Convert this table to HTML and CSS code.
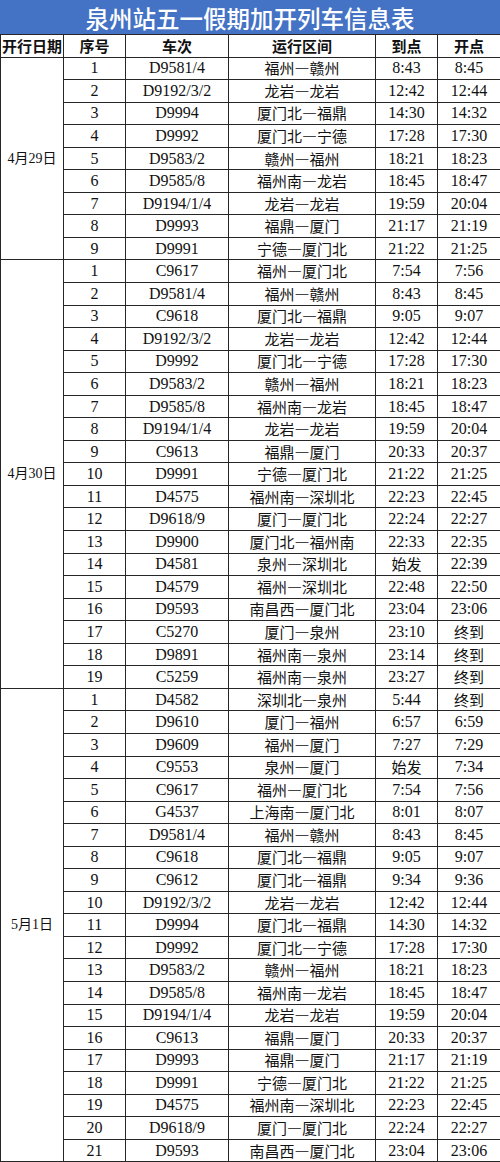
FILE: index.html
```html
<!DOCTYPE html>
<html lang="zh-CN">
<head>
<meta charset="utf-8">
<title>泉州站五一假期加开列车信息表</title>
<link rel="stylesheet" href="styles.css">
</head>
<body>
<div class="sheet">
  <div class="title">泉州站五一假期加开列车信息表</div>
  <table class="grid">
    <colgroup>
      <col class="c-date"><col class="c-no"><col class="c-train"><col class="c-route"><col class="c-arr"><col class="c-dep">
    </colgroup>
    <thead>
      <tr><th>开行日期</th><th>序号</th><th>车次</th><th>运行区间</th><th>到点</th><th>开点</th></tr>
    </thead>
    <tbody>
      <tr><td class="date" rowspan="9">4月29日</td><td>1</td><td>D9581/4</td><td class="route">福州—赣州</td><td>8:43</td><td>8:45</td></tr>
      <tr><td>2</td><td>D9192/3/2</td><td class="route">龙岩—龙岩</td><td>12:42</td><td>12:44</td></tr>
      <tr><td>3</td><td>D9994</td><td class="route">厦门北—福鼎</td><td>14:30</td><td>14:32</td></tr>
      <tr><td>4</td><td>D9992</td><td class="route">厦门北—宁德</td><td>17:28</td><td>17:30</td></tr>
      <tr><td>5</td><td>D9583/2</td><td class="route">赣州—福州</td><td>18:21</td><td>18:23</td></tr>
      <tr><td>6</td><td>D9585/8</td><td class="route">福州南—龙岩</td><td>18:45</td><td>18:47</td></tr>
      <tr><td>7</td><td>D9194/1/4</td><td class="route">龙岩—龙岩</td><td>19:59</td><td>20:04</td></tr>
      <tr><td>8</td><td>D9993</td><td class="route">福鼎—厦门</td><td>21:17</td><td>21:19</td></tr>
      <tr><td>9</td><td>D9991</td><td class="route">宁德—厦门北</td><td>21:22</td><td>21:25</td></tr>

      <tr><td class="date" rowspan="19">4月30日</td><td>1</td><td>C9617</td><td class="route">福州—厦门北</td><td>7:54</td><td>7:56</td></tr>
      <tr><td>2</td><td>D9581/4</td><td class="route">福州—赣州</td><td>8:43</td><td>8:45</td></tr>
      <tr><td>3</td><td>C9618</td><td class="route">厦门北—福鼎</td><td>9:05</td><td>9:07</td></tr>
      <tr><td>4</td><td>D9192/3/2</td><td class="route">龙岩—龙岩</td><td>12:42</td><td>12:44</td></tr>
      <tr><td>5</td><td>D9992</td><td class="route">厦门北—宁德</td><td>17:28</td><td>17:30</td></tr>
      <tr><td>6</td><td>D9583/2</td><td class="route">赣州—福州</td><td>18:21</td><td>18:23</td></tr>
      <tr><td>7</td><td>D9585/8</td><td class="route">福州南—龙岩</td><td>18:45</td><td>18:47</td></tr>
      <tr><td>8</td><td>D9194/1/4</td><td class="route">龙岩—龙岩</td><td>19:59</td><td>20:04</td></tr>
      <tr><td>9</td><td>C9613</td><td class="route">福鼎—厦门</td><td>20:33</td><td>20:37</td></tr>
      <tr><td>10</td><td>D9991</td><td class="route">宁德—厦门北</td><td>21:22</td><td>21:25</td></tr>
      <tr><td>11</td><td>D4575</td><td class="route">福州南—深圳北</td><td>22:23</td><td>22:45</td></tr>
      <tr><td>12</td><td>D9618/9</td><td class="route">厦门—厦门北</td><td>22:24</td><td>22:27</td></tr>
      <tr><td>13</td><td>D9900</td><td class="route">厦门北—福州南</td><td>22:33</td><td>22:35</td></tr>
      <tr><td>14</td><td>D4581</td><td class="route">泉州—深圳北</td><td class="cn">始发</td><td>22:39</td></tr>
      <tr><td>15</td><td>D4579</td><td class="route">福州—深圳北</td><td>22:48</td><td>22:50</td></tr>
      <tr><td>16</td><td>D9593</td><td class="route">南昌西—厦门北</td><td>23:04</td><td>23:06</td></tr>
      <tr><td>17</td><td>C5270</td><td class="route">厦门—泉州</td><td>23:10</td><td class="cn">终到</td></tr>
      <tr><td>18</td><td>D9891</td><td class="route">福州南—泉州</td><td>23:14</td><td class="cn">终到</td></tr>
      <tr><td>19</td><td>C5259</td><td class="route">福州南—泉州</td><td>23:27</td><td class="cn">终到</td></tr>

      <tr><td class="date" rowspan="21">5月1日</td><td>1</td><td>D4582</td><td class="route">深圳北—泉州</td><td>5:44</td><td class="cn">终到</td></tr>
      <tr><td>2</td><td>D9610</td><td class="route">厦门—福州</td><td>6:57</td><td>6:59</td></tr>
      <tr><td>3</td><td>D9609</td><td class="route">福州—厦门</td><td>7:27</td><td>7:29</td></tr>
      <tr><td>4</td><td>C9553</td><td class="route">泉州—厦门</td><td class="cn">始发</td><td>7:34</td></tr>
      <tr><td>5</td><td>C9617</td><td class="route">福州—厦门北</td><td>7:54</td><td>7:56</td></tr>
      <tr><td>6</td><td>G4537</td><td class="route">上海南—厦门北</td><td>8:01</td><td>8:07</td></tr>
      <tr><td>7</td><td>D9581/4</td><td class="route">福州—赣州</td><td>8:43</td><td>8:45</td></tr>
      <tr><td>8</td><td>C9618</td><td class="route">厦门北—福鼎</td><td>9:05</td><td>9:07</td></tr>
      <tr><td>9</td><td>C9612</td><td class="route">厦门北—福鼎</td><td>9:34</td><td>9:36</td></tr>
      <tr><td>10</td><td>D9192/3/2</td><td class="route">龙岩—龙岩</td><td>12:42</td><td>12:44</td></tr>
      <tr><td>11</td><td>D9994</td><td class="route">厦门北—福鼎</td><td>14:30</td><td>14:32</td></tr>
      <tr><td>12</td><td>D9992</td><td class="route">厦门北—宁德</td><td>17:28</td><td>17:30</td></tr>
      <tr><td>13</td><td>D9583/2</td><td class="route">赣州—福州</td><td>18:21</td><td>18:23</td></tr>
      <tr><td>14</td><td>D9585/8</td><td class="route">福州南—龙岩</td><td>18:45</td><td>18:47</td></tr>
      <tr><td>15</td><td>D9194/1/4</td><td class="route">龙岩—龙岩</td><td>19:59</td><td>20:04</td></tr>
      <tr><td>16</td><td>C9613</td><td class="route">福鼎—厦门</td><td>20:33</td><td>20:37</td></tr>
      <tr><td>17</td><td>D9993</td><td class="route">福鼎—厦门</td><td>21:17</td><td>21:19</td></tr>
      <tr><td>18</td><td>D9991</td><td class="route">宁德—厦门北</td><td>21:22</td><td>21:25</td></tr>
      <tr><td>19</td><td>D4575</td><td class="route">福州南—深圳北</td><td>22:23</td><td>22:45</td></tr>
      <tr><td>20</td><td>D9618/9</td><td class="route">厦门—厦门北</td><td>22:24</td><td>22:27</td></tr>
      <tr><td>21</td><td>D9593</td><td class="route">南昌西—厦门北</td><td>23:04</td><td>23:06</td></tr>
    </tbody>
  </table>
</div>
</body>
</html>
```
FILE: styles.css
```css
html, body {
  margin: 0;
  padding: 0;
  background: #ffffff;
}
.sheet {
  width: 500px;
}
.title {
  height: 34px;
  background: #4472c4;
  color: #ffffff;
  font-family: "Noto Sans CJK SC", sans-serif;
  font-weight: 500;
  font-size: 23.5px;
  line-height: 36px;
  text-align: center;
  white-space: nowrap;
}
.grid {
  width: 500px;
  table-layout: fixed;
  border-collapse: collapse;
  color: #111;
}
.c-date { width: 63px; }
.c-no { width: 62px; }
.c-train { width: 103px; }
.c-route { width: 147px; }
.c-arr { width: 62px; }
.c-dep { width: 63px; }
.grid th, .grid td {
  border: 1px solid #262626;
  padding: 0;
  height: 21.56px;
  text-align: center;
  vertical-align: middle;
  white-space: nowrap;
  overflow: hidden;
  line-height: 20px;
}
.grid th {
  font-family: "Noto Sans CJK SC", sans-serif;
  font-weight: 700;
  font-size: 15px;
}
.grid td {
  font-family: "Liberation Serif", "Noto Sans CJK SC", serif;
  font-size: 16px;
}
.grid td.route, .grid td.cn {
  font-family: "Noto Sans CJK SC", sans-serif;
  font-size: 15px;
  font-feature-settings: "fwid" 1;
}
.grid td.date {
  font-size: 14px;
}
```
